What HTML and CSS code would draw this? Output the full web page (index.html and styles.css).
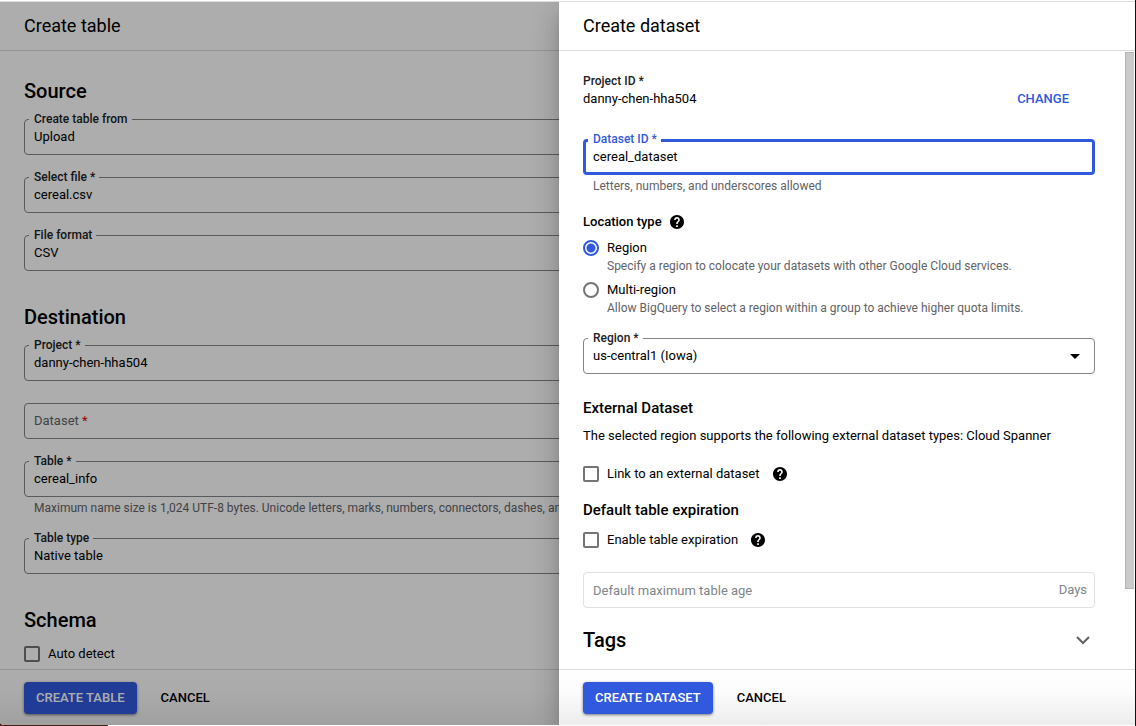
FILE: index.html
```html
<!DOCTYPE html>
<html lang="en">
<head>
<meta charset="utf-8">
<title>Create dataset</title>
<link rel="stylesheet" href="styles.css">
</head>
<body>
<svg class="defs" aria-hidden="true">
  <symbol id="help" viewBox="2 2 20 20"><path d="M12 2C6.480 2 2 6.480 2 12s4.480 10 10 10 10-4.480 10-10S17.520 2 12 2zm1.200 17h-2.400v-2.400h2.400V19zm2-7.750l-.9.920C13.500 12.900 13.200 13.500 13.200 15h-2.400v-.5c0-1.100.4-2.100 1.100-2.830l1.250-1.260c.4-.36.6-.86.6-1.410 0-1-.8-1.800-1.800-1.800s-1.800.8-1.800 1.800H7.900c0-2.200 1.800-4 4-4s4.100 1.800 4.100 4c0 .88-.3 1.680-.8 2.250z"/></symbol>
</svg>
<div class="window">
  <main class="panel">
    <header class="panel-header"><h1 class="title">Create table</h1></header>
    <form class="panel-body table-form">
      <section class="section">
        <h2 class="heading">Source</h2>
        <div class="fields">
          <div class="field"><label class="notch" for="from">Create table from</label><select class="control" id="from"><option>Upload</option></select></div>
          <div class="field"><label class="notch" for="file">Select file *</label><input class="control" id="file" value="cereal.csv"></div>
          <div class="field"><label class="notch" for="format">File format</label><select class="control" id="format"><option>CSV</option></select></div>
        </div>
      </section>
      <section class="section">
        <h2 class="heading">Destination</h2>
        <div class="fields">
          <div class="field"><label class="notch" for="project">Project *</label><input class="control" id="project" value="danny-chen-hha504"></div>
          <div class="field"><label class="empty-label" for="dataset">Dataset <span class="required">*</span></label><input class="control" id="dataset"></div>
          <div>
            <div class="field"><label class="notch" for="table">Table *</label><input class="control" id="table" value="cereal_info"></div>
            <p class="hint">Maximum name size is 1,024 UTF-8 bytes. Unicode letters, marks, numbers, connectors, dashes, and</p>
          </div>
          <div class="field"><label class="notch" for="type">Table type</label><select class="control" id="type"><option>Native table</option></select></div>
        </div>
      </section>
      <section class="section">
        <h2 class="heading schema-heading">Schema</h2>
        <label class="choice"><input class="box" type="checkbox">Auto detect</label>
      </section>
    </form>
    <footer class="panel-footer"><button class="button primary" type="button">CREATE TABLE</button><button class="button" type="button">CANCEL</button></footer>
  </main>
  <div class="scrim"></div>
  <aside class="panel drawer">
    <header class="panel-header"><h1 class="title">Create dataset</h1></header>
    <div class="panel-body drawer-body">
      <form class="dataset-form">
        <div class="project">
          <div><div class="caption">Project ID *</div><div>danny-chen-hha504</div></div>
          <button class="button link" type="button">CHANGE</button>
        </div>
        <div class="field focused"><label class="notch" for="dataset-id">Dataset ID *</label><input class="control" id="dataset-id" value="cereal_dataset"></div>
        <p class="hint">Letters, numbers, and underscores allowed</p>
        <div class="location">
          <div class="location-title">Location type <svg class="help"><use href="#help"/></svg></div>
          <label class="choice"><input class="radio" type="radio" name="location" checked>Region</label>
          <p class="detail">Specify a region to colocate your datasets with other Google Cloud services.</p>
          <label class="choice"><input class="radio" type="radio" name="location">Multi-region</label>
          <p class="detail">Allow BigQuery to select a region within a group to achieve higher quota limits.</p>
        </div>
        <div class="field"><label class="notch" for="region">Region *</label><select class="control" id="region"><option>us-central1 (Iowa)</option></select><svg class="caret" viewBox="0 0 10 5"><path d="M0 0h10L5 5z"/></svg></div>
        <h3 class="subheading external">External Dataset</h3>
        <p class="support">The selected region supports the following external dataset types: Cloud Spanner</p>
        <div class="choice-row"><label class="choice"><input class="box" type="checkbox">Link to an external dataset</label><svg class="help"><use href="#help"/></svg></div>
        <h3 class="subheading expiration">Default table expiration</h3>
        <div class="choice-row"><label class="choice"><input class="box" type="checkbox">Enable table expiration</label><svg class="help"><use href="#help"/></svg></div>
        <div class="field disabled"><input class="control" aria-label="Default maximum table age" placeholder="Default maximum table age" disabled><span class="suffix">Days</span></div>
        <div class="tags"><h2 class="tags-title">Tags</h2><svg class="chevron" viewBox="0 0 14 9"><path d="M1 1l6 6 6-6"/></svg></div>
      </form>
      <div class="rail"><div class="thumb"></div></div>
    </div>
    <footer class="panel-footer"><button class="button primary" type="button">CREATE DATASET</button><button class="button" type="button">CANCEL</button></footer>
  </aside>
</div>
</body>
</html>
```

FILE: styles.css
```css
* { box-sizing: border-box; }
body {
  margin: 0;
  height: 100vh;
  padding: 1px 1px 1px 0;
  background: linear-gradient(#111, #111) right / 1px 100% no-repeat,
    linear-gradient(#4a2c10, #4a2010) left bottom / 108px 8px no-repeat, #fff;
  font: 13px/18px Roboto, "Open Sans", sans-serif;
  color: #000;
}
h1, h2, h3, p { margin: 0; font-weight: 500; }
p { font-weight: 400; }
.defs { display: none; }
.window {
  position: relative;
  height: 100%;
  overflow: hidden;
  border-top: 1px solid #dadce0;
  border-radius: 0 0 4px 4px;
}
.panel {
  display: flex;
  flex-direction: column;
  height: 100%;
  background: #fff;
}
.scrim {
  position: absolute;
  inset: 0;
  background: rgba(0, 0, 0, .32);
}
.drawer {
  position: absolute;
  top: 0;
  right: 0;
  width: 576px;
  max-width: 100%;
  box-shadow: 0 8px 10px -5px rgba(0, 0, 0, .2), 0 16px 24px rgba(0, 0, 0, .14), 0 6px 30px rgba(0, 0, 0, .12);
}
.panel-header {
  flex: none;
  padding: 12px 24px;
  border-bottom: 1px solid #dadce0;
}
.title { font-size: 18px; line-height: 24px; font-weight: 400; }
.panel-body { flex: 1; min-height: 0; overflow: hidden; }
.panel-footer {
  flex: none;
  display: flex;
  gap: 12px;
  padding: 12px 24px 11px;
  border-top: 1px solid #dadce0;
  background: linear-gradient(#fff, #fcfcfc 40%, #ececec);
}
.button {
  height: 32px;
  padding: 0 12px;
  border: 0;
  border-radius: 4px;
  background: none;
  color: #000;
  font: 500 13px/18px Roboto, "Open Sans", sans-serif;
  white-space: nowrap;
}
.primary {
  background: #3059dd;
  color: #fff;
  box-shadow: 0 1px 3px rgba(0, 0, 0, .5);
}
.link { color: #3059dd; }
.table-form { padding: 28px 24px 0; }
.section { margin-bottom: 34px; }
.heading { margin-bottom: 16px; font-size: 20px; line-height: 24px; }
.schema-heading { margin-bottom: 13px; }
.fields { display: flex; flex-direction: column; gap: 22px; }
.field {
  position: relative;
  display: flex;
  align-items: center;
  height: 36px;
  border: 1px solid #80868b;
  border-radius: 4px;
  background: #fff;
}
.notch {
  position: absolute;
  top: -10px;
  left: 4px;
  padding: 0 4px 0 5px;
  background: #fff;
  font-size: 12px;
  line-height: 18px;
  font-weight: 500;
  color: #202124;
}
.control {
  flex: 1;
  min-width: 0;
  height: 34px;
  padding: 0 9px;
  border: 0;
  outline: 0;
  appearance: none;
  background: none;
  color: #000;
  font: inherit;
}
input.control { padding-bottom: 2px; }
.empty-label { padding-left: 9px; color: #5f6368; }
.required { color: #d50000; }
.hint { margin-top: 3px; padding-left: 10px; font-size: 12px; line-height: 16px; color: #5f6368; white-space: nowrap; }
.choice { display: flex; align-items: center; gap: 8px; }
.box {
  width: 16px;
  height: 16px;
  margin: 0;
  appearance: none;
  border: 2px solid #757575;
  border-radius: 2px;
}
.radio {
  width: 16px;
  height: 16px;
  margin: 0;
  appearance: none;
  border: 2px solid #757575;
  border-radius: 50%;
}
.radio:checked {
  border-color: #3059dd;
  background: radial-gradient(circle, #3059dd 4px, transparent 5px);
}
.drawer-body { display: flex; }
.dataset-form { flex: 1; min-width: 0; padding: 21px 30px 0 24px; }
.project { display: flex; justify-content: space-between; align-items: flex-end; margin-bottom: 31px; }
.project .link { height: 18px; margin-right: 14px; }
.caption { font-size: 12px; font-weight: 500; color: #202124; }
.focused { border: 3px solid #3059dd; }
.focused .notch { top: -12px; left: 2px; color: #3059dd; }
.focused .control { height: 30px; padding: 0 7px 2px; }
.location { margin: 19px 0 21px; }
.location-title { display: flex; align-items: center; gap: 8px; margin-bottom: 8px; font-weight: 500; }
.help { width: 14px; height: 14px; }
.detail { margin-bottom: 6px; padding-left: 24px; font-size: 12px; color: #5f6368; }
.location .detail:last-child { margin-bottom: 0; }
.caret { width: 10px; height: 5px; margin-right: 14px; }
.subheading { font-size: 15px; line-height: 20px; }
.external { margin: 24px 0 9px; }
.support { margin-bottom: 20px; }
.choice-row { display: flex; align-items: center; gap: 13px; }
.expiration { margin: 17px 0 11px; }
.disabled { margin: 23px 0 20px; border-color: #dfe1e5; }
.disabled .control { padding-bottom: 0; }
.disabled .control::placeholder { color: #80868b; opacity: 1; }
.suffix { padding-right: 7px; color: #80868b; }
.tags { display: flex; align-items: center; justify-content: space-between; padding-right: 5px; }
.tags-title { font-size: 20px; line-height: 24px; }
.chevron { width: 14px; height: 9px; fill: none; stroke: #5f6368; stroke-width: 2; }
.rail { flex: none; width: 10px; padding: 1px 1px 0 0; }
.thumb { height: 87%; border: solid #b4b4b4; border-width: 1px 0 1px 1px; background: #cacaca; }
```
